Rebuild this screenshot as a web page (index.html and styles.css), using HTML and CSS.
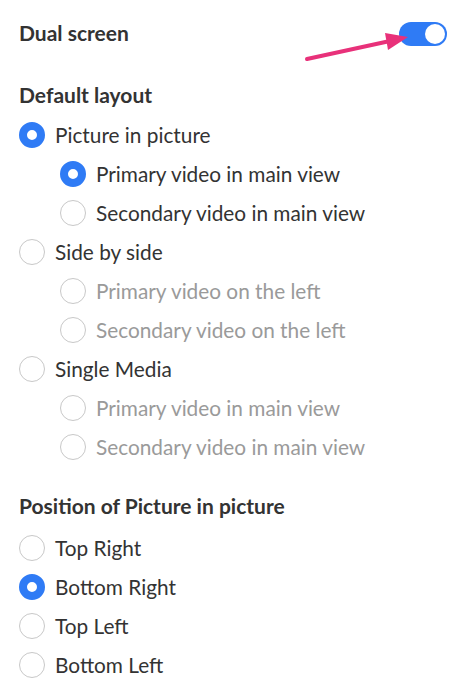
FILE: index.html
```html
<!DOCTYPE html>
<html>
<head>
<meta charset="utf-8">
<link rel="stylesheet" href="styles.css">
</head>
<body>
<div class="panel">
  <div class="top-row">
    <span class="heading top-title">Dual screen</span>
    <span class="toggle"><span class="knob"></span></span>
  </div>
  <div class="heading section-head">Default layout</div>
  <div class="options">
    <div class="opt"><span class="radio on"></span><span>Picture in picture</span></div>
    <div class="opt sub"><span class="radio on"></span><span>Primary video in main view</span></div>
    <div class="opt sub"><span class="radio"></span><span>Secondary video in main view</span></div>
    <div class="opt"><span class="radio"></span><span>Side by side</span></div>
    <div class="opt sub dim"><span class="radio"></span><span>Primary video on the left</span></div>
    <div class="opt sub dim"><span class="radio"></span><span>Secondary video on the left</span></div>
    <div class="opt"><span class="radio"></span><span>Single Media</span></div>
    <div class="opt sub dim"><span class="radio"></span><span>Primary video in main view</span></div>
    <div class="opt sub dim"><span class="radio"></span><span>Secondary video in main view</span></div>
  </div>
  <div class="heading section-head2">Position of Picture in picture</div>
  <div class="options opts2">
    <div class="opt"><span class="radio"></span><span>Top Right</span></div>
    <div class="opt"><span class="radio on"></span><span>Bottom Right</span></div>
    <div class="opt"><span class="radio"></span><span>Top Left</span></div>
    <div class="opt"><span class="radio"></span><span>Bottom Left</span></div>
  </div>
  <svg class="arrow" width="465" height="80" viewBox="0 0 465 80">
    <line x1="307" y1="59" x2="390" y2="41" stroke="#E8317A" stroke-width="4" stroke-linecap="round"/>
    <polygon points="408,37 388,50 385,33" fill="#E8317A"/>
  </svg>
</div>
</body>
</html>
```

FILE: styles.css
```css
html, body {
  margin: 0;
  padding: 0;
  background: #fff;
}
.panel {
  position: relative;
  padding: 22px 18px 0 19px;
  font-family: Lato, "Open Sans", sans-serif;
  color: #333;
}
.top-row {
  display: flex;
  justify-content: space-between;
  align-items: flex-start;
  height: 24px;
}
.heading {
  font-weight: 700;
  font-size: 21px;
  line-height: 24px;
  color: #333;
}
.top-title {
  line-height: 22px;
}
.toggle {
  position: relative;
  width: 48px;
  height: 24px;
  border-radius: 12px;
  background: #2F7BF5;
  box-sizing: border-box;
}
.knob {
  position: absolute;
  right: 2px;
  top: 2px;
  width: 20px;
  height: 20px;
  border-radius: 50%;
  background: #fff;
}
.section-head {
  margin-top: 37px;
}
.options {
  margin-top: 8px;
  display: flex;
  flex-direction: column;
}
.opt {
  display: flex;
  align-items: center;
  height: 39px;
  font-size: 20.8px;
  color: #333;
  gap: 10px;
}
.opt.sub {
  padding-left: 41px;
}
.opt.dim {
  color: #9a9a9a;
}
.radio {
  width: 26px;
  height: 26px;
  box-sizing: border-box;
  border-radius: 50%;
  border: 1px solid #c8c8c8;
  background: #fff;
  flex: none;
}
.radio.on {
  border: 8.5px solid #2F7BF5;
  background: #fff;
}
.section-head2 {
  margin-top: 28px;
}
.opts2 {
  margin-top: 10px;
}
.arrow {
  position: absolute;
  left: 0;
  top: 0;
  pointer-events: none;
}
```
